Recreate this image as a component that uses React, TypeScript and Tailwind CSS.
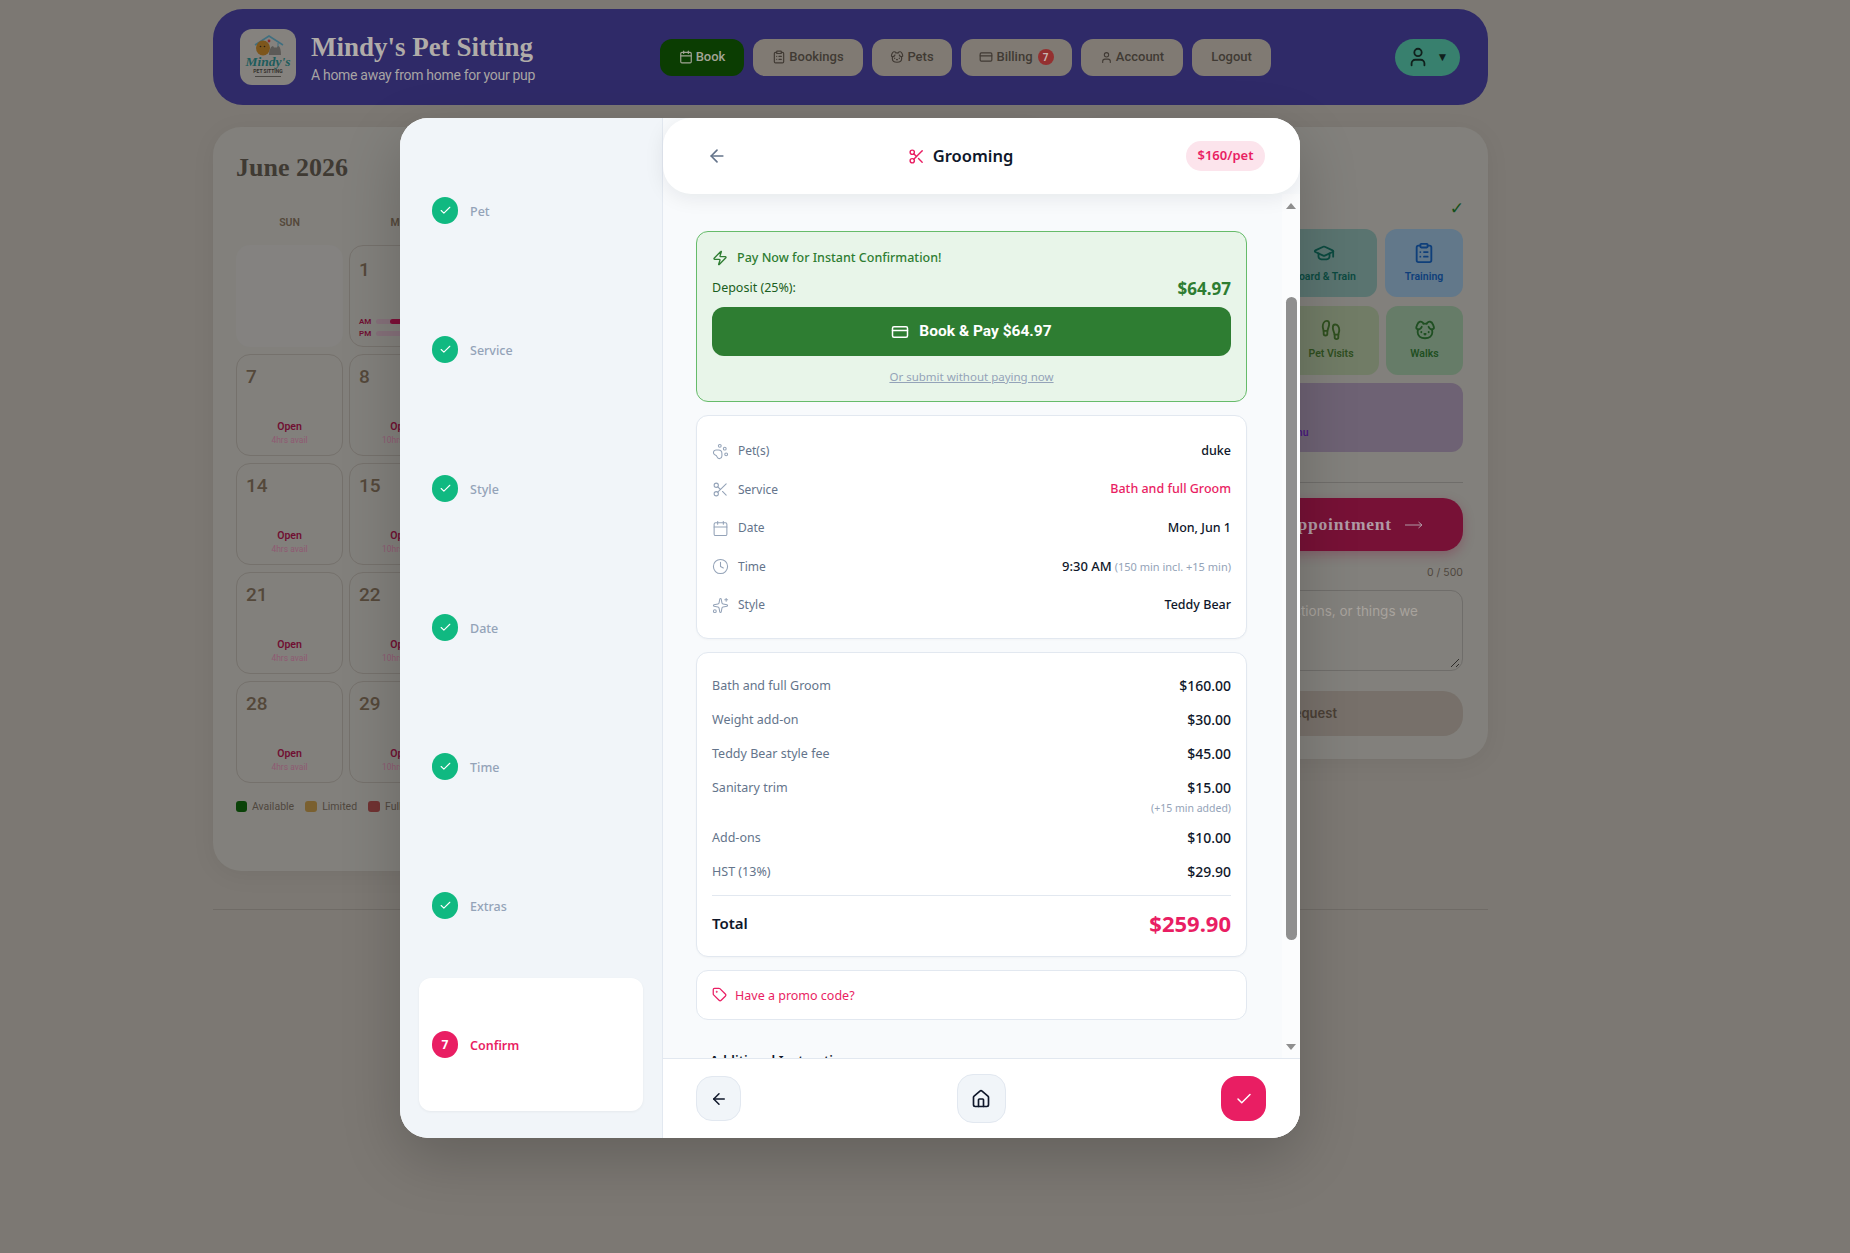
import {
  ArrowLeft,
  Calendar,
  Check,
  ClipboardList,
  Clock,
  CreditCard,
  Dog,
  Footprints,
  GraduationCap,
  House,
  PawPrint,
  Scissors,
  Sparkles,
  Tag,
  User,
  Zap,
} from "lucide-react";

const steps = ["Pet", "Service", "Style", "Date", "Time", "Extras"];

const details = [
  { icon: PawPrint, label: "Pet(s)", value: "duke", color: "text-[#0f172a]" },
  { icon: Scissors, label: "Service", value: "Bath and full Groom", color: "text-[#e91e63]" },
  { icon: Calendar, label: "Date", value: "Mon, Jun 1", color: "text-[#0f172a]" },
  { icon: Clock, label: "Time", value: "9:30 AM", note: "(150 min incl. +15 min)", color: "text-[#0f172a]" },
  { icon: Sparkles, label: "Style", value: "Teddy Bear", color: "text-[#0f172a]" },
];

const weeks = [
  { sun: "7", mon: "8" },
  { sun: "14", mon: "15" },
  { sun: "21", mon: "22" },
  { sun: "28", mon: "29" },
];

function NavButton({ children, active }: { children: React.ReactNode; active?: boolean }) {
  return (
    <div
      className={`h-[37px] flex items-center justify-center gap-[3px] rounded-xl text-[13px] font-medium ${
        active ? "bg-[#0b3d02] text-[#a3a596]" : "bg-[#807a73] text-[#403a34]"
      }`}
    >
      {children}
    </div>
  );
}

function Logo() {
  return (
    <div className="w-[56px] h-[56px] rounded-xl bg-[#85827e] flex flex-col items-center pt-[6px] shrink-0">
      <svg width="36" height="21" viewBox="0 0 36 21" fill="none">
        <path d="M5 10 L19 1 L33 10" stroke="#3f6f80" strokeWidth="1.5" />
        <path d="M28 8 V20" stroke="#3f6f80" strokeWidth="1" />
        <ellipse cx="13" cy="13" rx="7" ry="7.500" fill="#7d561c" />
        <circle cx="10.500" cy="11.500" r="0.800" fill="#2a2015" />
        <circle cx="14.500" cy="11.500" r="0.800" fill="#2a2015" />
        <path d="M19 20c0-5 2-9 4-9l1 1.500h3l1-1.500c2 0 3 4 3 9z" fill="#5c5a57" />
        <circle cx="19" cy="6" r="1.400" fill="#8c2b2b" />
      </svg>
      <span className="font-['Liberation_Serif'] italic font-bold text-[13.5px] leading-[11px] text-[#1d5c5c]">Mindy's</span>
      <span className="font-['Roboto'] font-bold text-[5px] leading-[8px] text-[#33302c] whitespace-nowrap">PET SITTING</span>
      <span className="w-[26px] h-px mt-[1px] bg-[#4a4743]" />
    </div>
  );
}

function DayCell({ day, hours }: { day: string; hours: string }) {
  return (
    <div className="h-[102px] rounded-[14px] border border-[#75716c] px-[9px] pt-[10px] flex flex-col items-center">
      <span className="self-start text-[19px] leading-[24px] font-medium text-[#54483a]">{day}</span>
      <span className="mt-[32px] text-[10.5px] leading-[12px] font-semibold text-[#700f32]">Open</span>
      <span className="mt-[2px] text-[8.5px] leading-[10px] text-[#8f5a72]">{hours}</span>
    </div>
  );
}

function Background() {
  return (
    <div className="w-[1275px] ml-[213px] pt-[9px] font-['Roboto']">
      <header className="h-[96px] rounded-[30px] bg-[#2f2a68] flex items-center pl-[27px] pr-[28px]">
        <Logo />
        <div className="ml-[15px] w-[349px] pt-[6px]">
          <div className="font-['Liberation_Serif'] font-bold text-[27px] leading-[32px] text-[#b0aca8] mt-[-4px]">Mindy's Pet Sitting</div>
          <div className="text-[14px] leading-[20px] text-[#a8a4a4] tracking-[-0.3px] mt-[2px]">A home away from home for your pup</div>
        </div>
        <nav className="grid grid-cols-[84px_110px_80px_111px_102px_79px] gap-[9px]">
          <NavButton active><Calendar size={14} />Book</NavButton>
          <NavButton><ClipboardList size={14} />Bookings</NavButton>
          <NavButton><Dog size={14} />Pets</NavButton>
          <NavButton>
            <CreditCard size={14} />Billing
            <span className="ml-[2px] w-[16px] h-[16px] rounded-full bg-[#943030] text-[#c9b6b0] text-[10px] font-bold flex items-center justify-center">7</span>
          </NavButton>
          <NavButton><User size={13} />Account</NavButton>
          <NavButton>Logout</NavButton>
        </nav>
        <div className="ml-auto w-[65px] h-[37px] rounded-full bg-[#38806e] flex items-center justify-center gap-[8px] text-[#10201c]">
          <User size={22} />
          <span className="text-[12px]">▼</span>
        </div>
      </header>

      <div className="flex items-start justify-between mt-[22px]">
        <section className="w-[840px] h-[744px] rounded-[28px] bg-[#82807c] shadow-[0_4px_24px_rgba(0,0,0,0.06)] pl-[23px] pt-[24px]">
          <h2 className="font-['Liberation_Serif'] font-bold text-[26px] leading-[34px] text-[#3f3a33]">June 2026</h2>
          <div className="grid grid-cols-[107px_107px] gap-x-[6px] mt-[30px] text-center text-[10.5px] font-semibold text-[#54483a]">
            <span>SUN</span>
            <span>MON</span>
          </div>
          <div className="grid grid-cols-[107px_107px] gap-x-[6px] gap-y-[7px] mt-[14px]">
            <div className="h-[102px] rounded-[14px] bg-[#848280]" />
            <div className="h-[102px] rounded-[14px] border border-[#75716c] px-[9px] pt-[12px] flex flex-col">
              <span className="text-[19px] leading-[24px] font-medium text-[#54483a]">1</span>
              <div className="mt-auto pb-[8px] flex flex-col gap-[3px] text-[8px] leading-[9px] font-semibold text-[#700f32]">
                <div className="flex items-center gap-[5px]">
                  <span>AM</span>
                  <span className="flex-1 h-[5px] bg-[#85707a] rounded-sm flex"><span className="ml-[14px] w-[20px] h-full bg-[#7e1038] rounded-sm" /></span>
                </div>
                <div className="flex items-center gap-[5px]">
                  <span>PM</span>
                  <span className="flex-1 h-[5px] bg-[#85707a] rounded-sm" />
                </div>
              </div>
            </div>
            {weeks.map((w) => (
              <div key={w.sun} className="contents">
                <DayCell day={w.sun} hours="4hrs avail" />
                <DayCell day={w.mon} hours="10hrs avail" />
              </div>
            ))}
          </div>
          <div className="flex items-center mt-[16px] text-[10.5px] leading-[16px] text-[#4f473e]">
            <span className="w-[11px] h-[11px] rounded-[3px] bg-[#0a4208]" />
            <span className="ml-[5px]">Available</span>
            <span className="ml-[11px] w-[12px] h-[11px] rounded-[3px] bg-[#7a6030]" />
            <span className="ml-[5px]">Limited</span>
            <span className="ml-[11px] w-[12px] h-[11px] rounded-[3px] bg-[#703232]" />
            <span className="ml-[5px]">Full</span>
          </div>
        </section>

        <section className="w-[413px] h-[632px] rounded-[28px] bg-[#82807c] shadow-[0_4px_24px_rgba(0,0,0,0.06)] pt-[71px] pl-[25px] pr-[25px] flex flex-col">
          <div className="text-right text-[#14501a] text-[17px] font-bold leading-[20px] font-['DejaVu_Sans'] -mr-[1px]">✓</div>
          <div className="flex justify-end gap-[8px] mt-[11px]">
            <div className="w-[106px] h-[68px] rounded-xl bg-[#5a7470] flex flex-col items-center pt-[13px] text-[#0c4a40]">
              <GraduationCap size={22} />
              <span className="mt-[7px] text-[10.5px] font-semibold leading-[12px]">Board &amp; Train</span>
            </div>
            <div className="w-[78px] h-[68px] rounded-xl bg-[#62788a] flex flex-col items-center pt-[13px] text-[#0f3f7a]">
              <ClipboardList size={22} />
              <span className="mt-[7px] text-[10.5px] font-semibold leading-[12px]">Training</span>
            </div>
          </div>
          <div className="flex justify-end gap-[7px] mt-[9px]">
            <div className="w-[96px] h-[69px] rounded-xl bg-[#717c66] flex flex-col items-center pt-[13px] text-[#2f4f1f]">
              <Footprints size={22} />
              <span className="mt-[7px] text-[10.5px] font-semibold leading-[12px]">Pet Visits</span>
            </div>
            <div className="w-[77px] h-[69px] rounded-xl bg-[#667c68] flex flex-col items-center pt-[13px] text-[#1f4f22]">
              <Dog size={22} />
              <span className="mt-[7px] text-[10.5px] font-semibold leading-[12px]">Walks</span>
            </div>
          </div>
          <div className="h-[69px] rounded-xl bg-[#6e6274] mt-[8px] flex items-end justify-center pb-[13px] text-[10.5px] font-semibold leading-[12px] text-[#4a1a80]">
            <span className="ml-[-13px]">Daycare Menu</span>
          </div>
          <div className="h-px bg-[#6f6d6a] mt-[30px]" />
          <div className="h-[53px] mt-[15px] rounded-[20px] bg-[#771136] shadow-[0_4px_12px_rgba(126,18,56,0.3)] flex items-center justify-end pr-[40px] gap-[13px] text-[#b09aa5] font-['Liberation_Serif'] font-bold text-[17.5px] tracking-[0.8px]">
            <span>Request Appointment</span>
            <svg width="18" height="8" viewBox="0 0 18 8" fill="none" stroke="currentColor" strokeWidth="1"><path d="M0 4h17M13.500 1l3.500 3-3.500 3" /></svg>
          </div>
          <div className="text-right text-[10.5px] leading-[14px] text-[#4f473e] mt-[15px] font-['Inter']">0 / 500</div>
          <div className="relative h-[81px] mt-[10px] rounded-xl border border-[#6f6d6a] flex justify-end pt-[10px] pr-[44px] text-[13.5px] leading-[20px] text-[#a8a39d] font-['Inter'] whitespace-nowrap">
            Any notes, special instructions, or things we
            <svg className="absolute right-[2px] bottom-[2px]" width="10" height="10" viewBox="0 0 10 10" stroke="#2e2c2a" strokeWidth="1"><path d="M1 9 9 1M6 9 9 6" /></svg>
          </div>
          <div className="h-[45px] mt-[20px] rounded-[20px] bg-[#77706a] flex items-center justify-end pr-[126px] text-[13px] font-semibold text-[#4a3f35] font-['Inter']">Send Request</div>
        </section>
      </div>
      <div className="h-px bg-[#6f6b66] mt-[38px]" />
    </div>
  );
}

function Row({ label, value }: { label: string; value: string }) {
  return (
    <div className="flex justify-between items-center h-[20px]">
      <span className="text-[12.5px] text-[#64748b]">{label}</span>
      <span className="text-[14px] font-medium text-[#0f172a] mb-[2px]">{value}</span>
    </div>
  );
}

function Modal() {
  return (
    <div className="absolute left-[400px] top-[118px] w-[900px] h-[1020px] rounded-[28px] bg-white overflow-hidden flex font-['Noto_Sans'] shadow-[0_20px_60px_rgba(0,0,0,0.2)]">
      <aside className="w-[263px] shrink-0 bg-[#f1f5f9] border-r border-[#e2e8f0] px-[19px] pt-[26px] pb-[27px] flex flex-col gap-[6px]">
        {steps.map((s) => (
          <div key={s} className="flex-1 flex items-center pl-[13px] gap-[12px]">
            <span className="w-[26px] h-[27px] rounded-full bg-[#10b981] text-white flex items-center justify-center">
              <Check size={13} strokeWidth={2} />
            </span>
            <span className="text-[12.5px] font-medium text-[#94a3b8] mt-[4px]">{s}</span>
          </div>
        ))}
        <div className="flex-1 flex items-center pl-[13px] gap-[12px] bg-white rounded-xl shadow-[0_1px_3px_rgba(0,0,0,0.05)]">
          <span className="w-[26px] h-[27px] rounded-full bg-[#e91e63] text-white text-[12px] font-bold flex items-center justify-center">7</span>
          <span className="text-[12.5px] font-semibold text-[#e91e63] mt-[3px]">Confirm</span>
        </div>
      </aside>

      <main className="flex-1 flex flex-col bg-[#f8fafc] min-w-0">
        <div className="relative z-10 h-[76px] shrink-0 bg-white rounded-[28px] shadow-[0_4px_20px_rgba(15,23,42,0.08)] flex items-center justify-between pl-[44px] pr-[35px]">
          <ArrowLeft size={20} className="text-[#64748b]" />
          <div className="flex items-center gap-[8px] text-[#0f172a] ml-[8px]">
            <Scissors size={17} className="text-[#e91e63]" />
            <span className="text-[16.5px] font-semibold">Grooming</span>
          </div>
          <span className="h-[30px] w-[79px] rounded-full bg-[#fce4ec] text-[#e91e63] text-[13px] font-semibold flex items-center justify-center">$160/pet</span>
        </div>

        <div className="flex-1 flex min-h-0">
          <div className="flex-1 overflow-hidden pl-[33px] pr-[35px] pt-[37px] flex flex-col gap-[13px]">
            <section className="h-[171px] shrink-0 rounded-xl border border-[#66bb6a] bg-[#e8f5e9] px-[15px] pt-[14px]">
              <div className="flex items-center gap-[9px] text-[12.5px] font-medium text-[#2e7d32] h-[24px]">
                <Zap size={16} />
                Pay Now for Instant Confirmation!
              </div>
              <div className="flex items-center justify-between h-[26px] mt-[5px]">
                <span className="text-[12.5px] text-[#1b5e20]">Deposit (25%):</span>
                <span className="text-[17px] font-bold text-[#2e7d32] mt-[1px]">$64.97</span>
              </div>
              <div className="h-[49px] mt-[6px] rounded-xl bg-[#2e7d32] text-white flex items-center justify-center gap-[10px] font-['Roboto'] text-[15.5px] font-bold">
                <CreditCard size={18} />
                Book &amp; Pay $64.97
              </div>
              <div className="text-center text-[11.5px] leading-[16px] mt-[13px] text-[#94a3b8] underline">Or submit without paying now</div>
            </section>

            <section className="h-[224px] shrink-0 rounded-xl border border-[#e2e8f0] bg-white px-[15px] pt-[16px] shadow-[0_1px_2px_rgba(0,0,0,0.03)]">
              {details.map((d) => (
                <div key={d.label} className="flex items-center h-[38.500px]">
                  <d.icon size={17} strokeWidth={1.5} className="text-[#94a3b8]" />
                  <span className="ml-[9px] text-[12px] text-[#64748b]">{d.label}</span>
                  <span className={`ml-auto font-medium ${d.note ? "text-[13px]" : "text-[12.5px]"} ${d.color}`}>{d.value}</span>
                  {d.note ? <span className="ml-[3px] text-[11px] text-[#94a3b8]">{d.note}</span> : null}
                </div>
              ))}
            </section>

            <section className="h-[305px] shrink-0 rounded-xl border border-[#e2e8f0] bg-white px-[15px] pt-[23px] shadow-[0_1px_2px_rgba(0,0,0,0.03)]">
              <div className="flex flex-col gap-[14px]">
                <Row label="Bath and full Groom" value="$160.00" />
                <Row label="Weight add-on" value="$30.00" />
                <Row label="Teddy Bear style fee" value="$45.00" />
              </div>
              <div className="mt-[14px]">
                <Row label="Sanitary trim" value="$15.00" />
              </div>
              <div className="text-right text-[10.5px] leading-[14px] mt-[3px] text-[#94a3b8]">(+15 min added)</div>
              <div className="flex flex-col gap-[14px] mt-[13px]">
                <Row label="Add-ons" value="$10.00" />
                <Row label="HST (13%)" value="$29.90" />
              </div>
              <div className="h-px bg-[#e2e8f0] mt-[13px]" />
              <div className="flex justify-between items-center mt-[11px]">
                <span className="text-[15px] font-semibold text-[#0f172a]">Total</span>
                <span className="text-[22px] leading-[32px] font-bold text-[#e91e63]">$259.90</span>
              </div>
            </section>

            <section className="h-[50px] shrink-0 rounded-xl border border-[#e2e8f0] bg-white px-[15px] flex items-center gap-[8px] text-[12.5px] text-[#e91e63]">
              <Tag size={15} className="-mt-[1px]" />
              <span className="mt-[3px]">Have a promo code?</span>
            </section>

            <div className="mt-[18px] pl-[14px] text-[13px] font-semibold text-[#0f172a] shrink-0">Additional Instructions</div>
          </div>

          <div className="w-[18px] shrink-0 bg-[#fbfcfd] flex flex-col items-center pt-[9px] pb-[8px]">
            <span className="w-0 h-0 border-x-[5px] border-x-transparent border-b-[6px] border-b-[#8f8f8f]" />
            <span className="w-[11px] h-[643px] rounded-[6px] bg-[#8f8f8f] mt-[88px]" />
            <span className="mt-auto w-0 h-0 border-x-[5px] border-x-transparent border-t-[6px] border-t-[#8f8f8f]" />
          </div>
        </div>

        <div className="relative z-10 h-[80px] shrink-0 bg-white border-t border-[#e2e8f0] flex items-center justify-between pl-[33px] pr-[34px]">
          <div className="w-[45px] h-[45px] rounded-2xl bg-[#f1f5f9] border border-[#e2e8f0] flex items-center justify-center text-[#0f172a]">
            <ArrowLeft size={18} />
          </div>
          <div className="w-[49px] h-[49px] rounded-2xl bg-[#f1f5f9] border border-[#e2e8f0] flex items-center justify-center text-[#0f172a]">
            <House size={20} />
          </div>
          <div className="w-[45px] h-[45px] rounded-2xl bg-[#e91e63] flex items-center justify-center text-white">
            <Check size={18} strokeWidth={2} />
          </div>
        </div>
      </main>
    </div>
  );
}

export default function App() {
  return (
    <div className="relative w-[1850px] h-[1253px] overflow-hidden bg-[#7c7873]">
      <Background />
      <Modal />
    </div>
  );
}
